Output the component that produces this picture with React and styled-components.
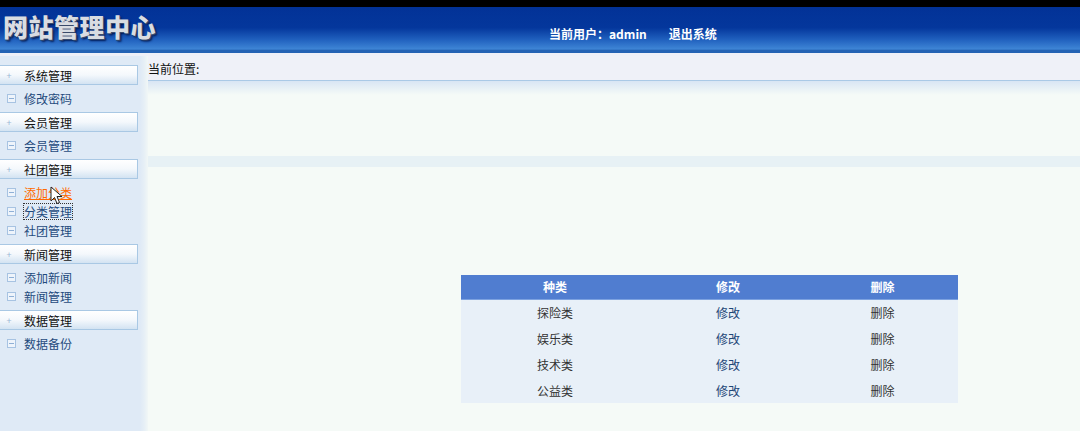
import React from 'react';
import styled, { createGlobalStyle } from 'styled-components';

const Global = createGlobalStyle`
  html, body {
    margin: 0;
    padding: 0;
    background: #f5faf7;
    font-family: "Noto Sans CJK SC", "Liberation Sans", sans-serif;
    font-size: 12px;
    overflow: hidden;
  }
`;

const Page = styled.div`
  width: 1080px;
  height: 431px;
  display: flex;
  flex-direction: column;
  border-top: 7px solid #000;
  box-sizing: border-box;
`;

const Header = styled.div`
  height: 46px;
  display: flex;
  align-items: flex-start;
  background: linear-gradient(to bottom, #023297 0%, #04379c 45%, #1f5fbd 70%, #3f86d6 92%, #2463b4 93%, #2463b4 100%);
  border-bottom: 3px solid #eef0f8;
`;

const Title = styled.div`
  font-size: 25px;
  font-weight: 900;
  letter-spacing: 0.5px;
  color: #d9dce2;
  text-shadow: 1px 1px 0 #3a4a6a, 2px 2px 2px #001a55;
  padding: 4px 0 0 3px;
  line-height: 30px;
  width: 540px;
`;

const UserBar = styled.div`
  display: flex;
  gap: 22px;
  color: #fff;
  font-weight: bold;
  font-size: 12px;
  padding-top: 18px;
  margin-left: 6px;
`;

const Body = styled.div`
  flex: 1;
  display: flex;
  min-height: 0;
`;

const Side = styled.div`
  width: 148px;
  flex-shrink: 0;
  background: linear-gradient(to right, #dfeaf6 0, #dfeaf6 140px, #e6eff6 144px, #f1f7f6 148px);
  padding-top: 9px;
  box-sizing: border-box;
`;

const Head = styled.div`
  width: 138px;
  height: 20px;
  box-sizing: border-box;
  border: 1px solid #a9c8e4;
  border-left: none;
  background: linear-gradient(to bottom, #ffffff 0%, #f4f8fc 50%, #d3e3f2 100%);
  display: flex;
  align-items: center;
  color: #111;
  font-size: 12px;
`;

const Plus = styled.span`
  width: 24px;
  text-align: center;
  color: #9bb7d6;
  font-size: 9px;
  padding-right: 6px;
  box-sizing: border-box;
`;

const Items = styled.div`
  padding: 4px 0;
`;

const Item = styled.div`
  height: 19px;
  display: flex;
  align-items: center;
  font-size: 12px;
  color: ${p => (p.$hover ? '#ff6a00' : '#1f4a7d')};
`;

const Box = styled.span`
  width: 7px;
  height: 7px;
  border: 1px solid #a7c3e2;
  margin: 0 8px 0 7px;
  position: relative;
  background: #eef4fb;
  &::after {
    content: '';
    position: absolute;
    left: 1px;
    right: 1px;
    top: 3px;
    height: 1px;
    background: #8fb0d6;
  }
`;

const Label = styled.span`
  text-decoration: ${p => (p.$hover ? 'underline' : 'none')};
  outline: ${p => (p.$focus ? '1px dotted #333' : 'none')};
  line-height: 15px;
  position: relative;
`;

const Cursor = styled.svg`
  position: absolute;
  left: 26px;
  top: 1px;
  width: 14px;
  height: 20px;
`;

const Main = styled.div`
  flex: 1;
  display: flex;
  flex-direction: column;
`;

const Crumb = styled.div`
  height: 24px;
  background: #eff1f8;
  border-bottom: 1px solid #aac9e6;
  display: flex;
  align-items: center;
  color: #111;
  font-size: 12px;
`;

const Fade = styled.div`
  height: 14px;
  background: linear-gradient(to bottom, #d9e5f4, #f5faf7);
`;

const Spacer = styled.div`
  height: ${p => p.$h}px;
`;

const Strip = styled.div`
  height: 11px;
  background: #e7f1f5;
`;

const Table = styled.table`
  margin-left: 313px;
  width: 497px;
  border-collapse: collapse;
  table-layout: fixed;
  background: #e8f0f8;
  font-size: 12px;
  th {
    background: #507dd0;
    color: #fff;
    font-weight: bold;
    height: 24px;
    padding: 0;
    line-height: 24px;
    border-bottom: 1px solid #7da2e0;
  }
  td {
    height: 25.75px;
    line-height: 25px;
    text-align: center;
    color: #333;
    padding: 0;
  }
`;

const Edit = styled.td`
  && { color: #1d4677; }
`;

const menu = [
  { title: '系统管理', items: ['修改密码'] },
  { title: '会员管理', items: ['会员管理'] },
  { title: '社团管理', items: ['添加分类', '分类管理', '社团管理'] },
  { title: '新闻管理', items: ['添加新闻', '新闻管理'] },
  { title: '数据管理', items: ['数据备份'] },
];

const rows = ['探险类', '娱乐类', '技术类', '公益类'];

export default function App() {
  return (
    <Page>
      <Global />
      <Header>
        <Title>网站管理中心</Title>
        <UserBar>
          <span>当前用户：admin</span>
          <span>退出系统</span>
        </UserBar>
      </Header>
      <Body>
        <Side>
          {menu.map(g => (
            <div key={g.title}>
              <Head>
                <Plus>+</Plus>
                {g.title}
              </Head>
              <Items>
                {g.items.map(it => {
                  const hover = it === '添加分类';
                  const focus = it === '分类管理' && g.title === '社团管理';
                  return (
                    <Item key={it} $hover={hover}>
                      <Box />
                      <Label $hover={hover} $focus={focus}>
                        {it}
                        {hover && (
                          <Cursor viewBox="0 0 14 20">
                            <path d="M1 1 L1 15 L4.5 11.5 L7 17.5 L9.5 16.5 L7 10.5 L12 10.5 Z" fill="#fff" stroke="#222" strokeWidth="1" strokeLinejoin="round" />
                          </Cursor>
                        )}
                      </Label>
                    </Item>
                  );
                })}
              </Items>
            </div>
          ))}
        </Side>
        <Main>
          <Crumb>当前位置:</Crumb>
          <Fade />
          <Spacer $h={61} />
          <Strip />
          <Spacer $h={108} />
          <Table>
            <colgroup>
              <col style={{ width: 188 }} />
              <col style={{ width: 158 }} />
              <col style={{ width: 151 }} />
            </colgroup>
            <thead>
              <tr>
                <th>种类</th>
                <th>修改</th>
                <th>删除</th>
              </tr>
            </thead>
            <tbody>
              {rows.map(r => (
                <tr key={r}>
                  <td>{r}</td>
                  <Edit>修改</Edit>
                  <td>删除</td>
                </tr>
              ))}
            </tbody>
          </Table>
        </Main>
      </Body>
    </Page>
  );
}
